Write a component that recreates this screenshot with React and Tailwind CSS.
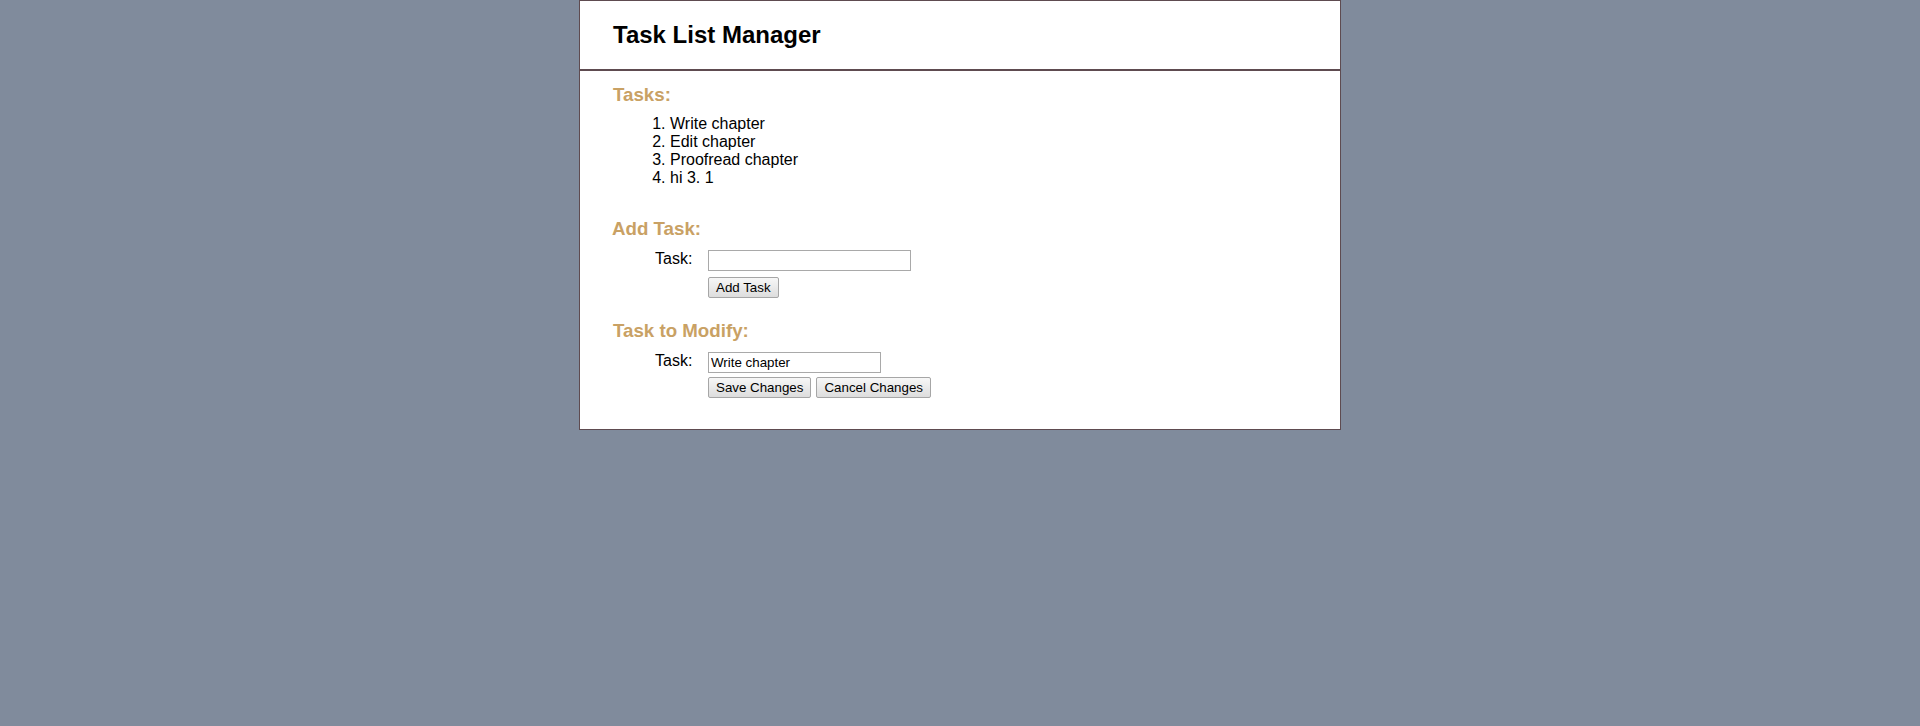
import React, { useState } from "react";

const TASKS = ["Write chapter", "Edit chapter", "Proofread chapter", "hi 3. 1"];

const Button = ({ children }) => (
  <button
    type="button"
    className="h-[21px] px-[7px] text-[13.33px] leading-[15px] text-black border border-[#a6a6a6] rounded-[2px] bg-linear-to-b from-[#f7f7f7] to-[#dddddd]"
  >
    {children}
  </button>
);

const SectionTitle = ({ children, className = "" }) => (
  <h3 className={`text-[18.72px] leading-[22px] font-bold text-[#c9a164] ${className}`}>
    {children}
  </h3>
);

export default function App() {
  const [newTask, setNewTask] = useState("");
  const [editTask, setEditTask] = useState("Write chapter");

  return (
    <div className="min-h-screen bg-[#808b9c] font-['Liberation_Sans',Arial,sans-serif] text-black">
      <div className="mx-auto w-[762px] bg-white border border-[#5e4b50]">
        {/* Header */}
        <header className="pl-[33px] pt-5 pb-5 border-b-2 border-[#5e4b50]">
          <h2 className="text-[24px] leading-[28px] font-bold">Task List Manager</h2>
        </header>

        <main className="pt-[13px] pb-[31px]">
          <SectionTitle className="pl-[33px]">Tasks:</SectionTitle>
          <ol className="mt-[9px] pl-[90px] list-decimal text-[16px] leading-[18px]">
            {TASKS.map((task) => (
              <li key={task}>{task}</li>
            ))}
          </ol>

          <SectionTitle className="mt-[31px] pl-[32px]">Add Task:</SectionTitle>
          <div className="mt-[10px] pl-[75px] grid grid-cols-[53px_auto] gap-y-[4px]">
            <label className="text-[16px] leading-[18px]">Task:</label>
            <div>
              <input
                type="text"
                value={newTask}
                onChange={(e) => setNewTask(e.target.value)}
                className="block w-[203px] h-[21px] px-[2px] text-[13.33px] border border-[#a9a9a9] outline-none"
              />
            </div>
            <div />
            <div>
              <Button>Add Task</Button>
            </div>
          </div>

          <SectionTitle className="mt-[21px] pl-[33px]">Task to Modify:</SectionTitle>
          <div className="mt-[10px] pl-[75px] grid grid-cols-[53px_auto] gap-y-[4px]">
            <label className="text-[16px] leading-[18px]">Task:</label>
            <div>
              <input
                type="text"
                value={editTask}
                onChange={(e) => setEditTask(e.target.value)}
                className="block w-[173px] h-[21px] px-[2px] text-[13.33px] border border-[#a9a9a9] outline-none"
              />
            </div>
            <div />
            <div className="flex gap-[5px]">
              <Button>Save Changes</Button>
              <Button>Cancel Changes</Button>
            </div>
          </div>
        </main>
      </div>
    </div>
  );
}
